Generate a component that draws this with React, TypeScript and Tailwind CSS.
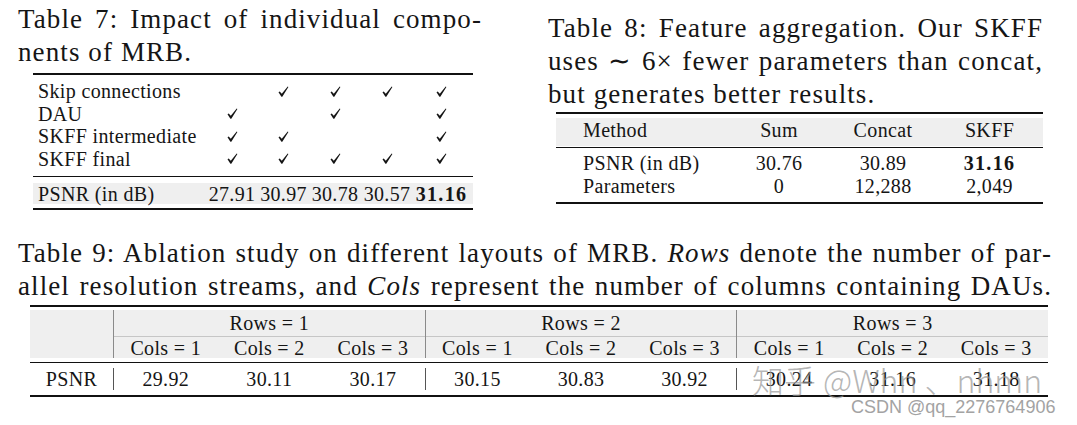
import React from "react";

const Check = () => (
  <svg width="11" height="11" viewBox="0 0 11 11" className="inline-block">
    <path d="M0.5 6.3 L1.7 5.5 L3.8 7.8 L9.7 0.4 L10.4 0.9 L4.3 10.7 L3.4 10.7 Z" fill="currentColor" />
  </svg>
);

const t7Rows: { label: string; marks: boolean[] }[] = [
  { label: "Skip connections", marks: [false, true, true, true, true] },
  { label: "DAU", marks: [true, false, true, false, true] },
  { label: "SKFF intermediate", marks: [true, true, false, false, true] },
  { label: "SKFF final", marks: [true, true, true, true, true] },
];

const t7Cols = "grid grid-cols-[168px_52px_51px_52px_52px_57px] items-center";
const t8Cols = "grid grid-cols-[145px_102px_106px_107px] items-center";

const groups = [
  { rows: 1, values: ["29.92", "30.11", "30.17"] },
  { rows: 2, values: ["30.15", "30.83", "30.92"] },
  { rows: 3, values: ["30.24", "31.16", "31.18"] },
];

function Table7() {
  return (
    <div className="w-[464px]">
      <div className="pt-[3px] text-[27px] leading-[33px] tracking-[1.1px]">
        <div className="text-justify [text-align-last:justify]">Table 7: Impact of individual compo-</div>
        <div>nents of MRB.</div>
      </div>
      <div className="ml-[15px] w-[440px] mt-[4px] text-[20px] leading-[20px] tracking-[0.35px]">
        <div className="h-[2px] bg-[#111]" />
        <div className="pt-[5px] pl-[5px]">
          {t7Rows.map((r) => (
            <div key={r.label} className={`${t7Cols} h-[22.5px]`}>
              <div>{r.label}</div>
              {r.marks.map((m, i) => (
                <div key={i} className="flex justify-center">
                  {m ? <Check /> : null}
                </div>
              ))}
            </div>
          ))}
        </div>
        <div className="mt-[6px] h-px bg-[#111]" />
        <div className={`mt-[6px] h-[21px] bg-[#efefef] pl-[5px] ${t7Cols}`}>
          <div>PSNR (in dB)</div>
          <div className="text-center">27.91</div>
          <div className="text-center">30.97</div>
          <div className="text-center">30.78</div>
          <div className="text-center">30.57</div>
          <div className="text-center font-bold tracking-[1.3px]">31.16</div>
        </div>
        <div className="mt-[4px] h-[2px] bg-[#111]" />
      </div>
    </div>
  );
}

function Table8() {
  return (
    <div className="ml-[66px] w-[495px]">
      <div className="pt-[12px] text-[27px] leading-[33px] tracking-[1.1px]">
        <div className="text-justify [text-align-last:justify]">Table 8: Feature aggregation. Our SKFF</div>
        <div className="text-justify [text-align-last:justify]">uses ∼ 6× fewer parameters than concat,</div>
        <div>but generates better results.</div>
      </div>
      <div className="ml-[8px] w-[487px] mt-px text-[20px] leading-[20px] tracking-[0.35px]">
        <div className="h-[2px] bg-[#111]" />
        <div className="mt-[4px] h-[28px] bg-[#efefef] pl-[27px] pb-[4px]">
          <div className={`${t8Cols} h-[24px]`}>
            <div>Method</div>
            <div className="text-center">Sum</div>
            <div className="text-center">Concat</div>
            <div className="text-center">SKFF</div>
          </div>
        </div>
        <div className="mt-px h-px bg-[#111]" />
        <div className="pt-[4px] pl-[27px]">
          <div className={`${t8Cols} h-[22px]`}>
            <div>PSNR (in dB)</div>
            <div className="text-center">30.76</div>
            <div className="text-center">30.89</div>
            <div className="text-center font-bold tracking-[1.3px]">31.16</div>
          </div>
          <div className={`${t8Cols} h-[24px]`}>
            <div>Parameters</div>
            <div className="text-center">0</div>
            <div className="text-center">12,288</div>
            <div className="text-center">2,049</div>
          </div>
        </div>
        <div className="mt-[4px] h-[2px] bg-[#111]" />
      </div>
    </div>
  );
}

function Table9() {
  return (
    <div className="pl-[18px] mt-[27px]">
      <div className="w-[1034px] text-[27px] leading-[33px] tracking-[1.1px]">
        <div className="text-justify [text-align-last:justify]">
          Table 9: Ablation study on different layouts of MRB. <i>Rows</i> denote the number of par-
        </div>
        <div className="text-justify [text-align-last:justify]">
          allel resolution streams, and <i>Cols</i> represent the number of columns containing DAUs.
        </div>
      </div>
      <div className="ml-[12px] w-[1018px] mt-[2px] text-[20px] leading-[20px] tracking-[0.35px]">
        <div className="h-[2px] bg-[#111]" />
        <div className="mt-[3px] flex bg-[#efefef]">
          <div className="w-[83px]" />
          {groups.map((g) => (
            <div key={g.rows} className="flex-1 border-l border-[#8a8a8a]">
              <div className="h-[26px] flex items-center justify-center">Rows = {g.rows}</div>
              <div className="h-px bg-[#c6c6c6]" />
              <div className="grid grid-cols-3 h-[21px] items-center text-center">
                <div>Cols = 1</div>
                <div>Cols = 2</div>
                <div>Cols = 3</div>
              </div>
            </div>
          ))}
        </div>
        <div className="mt-[4px] h-px bg-[#111]" />
        <div className="flex h-[32px] items-center">
          <div className="w-[83px] text-center">PSNR</div>
          {groups.map((g) => (
            <div key={g.rows} className="flex-1 h-[22px] border-l border-[#555] grid grid-cols-3 items-center text-center">
              {g.values.map((v) => (
                <div key={v}>{v}</div>
              ))}
            </div>
          ))}
        </div>
        <div className="h-[2px] bg-[#111]" />
      </div>
    </div>
  );
}

export default function App() {
  return (
    <div className="relative w-[1077px] h-[425px] overflow-hidden bg-white text-[#151515] [font-family:'Liberation_Serif','Times_New_Roman',serif]">
      <div className="flex items-start pl-[18px]">
        <Table7 />
        <Table8 />
      </div>
      <Table9 />

      {/* watermarks laid over the last table */}
      <div className="absolute left-[752px] top-[358px] text-[32px] leading-[42px] font-light text-[rgba(150,150,150,0.7)] [font-family:'Noto_Sans_CJK_SC','Noto_Sans',sans-serif]">
        知乎 @Whn 、nhmn
      </div>
      <div className="absolute left-[851px] top-[396px] text-[18px] leading-[22px] text-[#a3a3a3] [font-family:'Liberation_Sans',Arial,sans-serif]">
        CSDN @qq_2276764906
      </div>
    </div>
  );
}
